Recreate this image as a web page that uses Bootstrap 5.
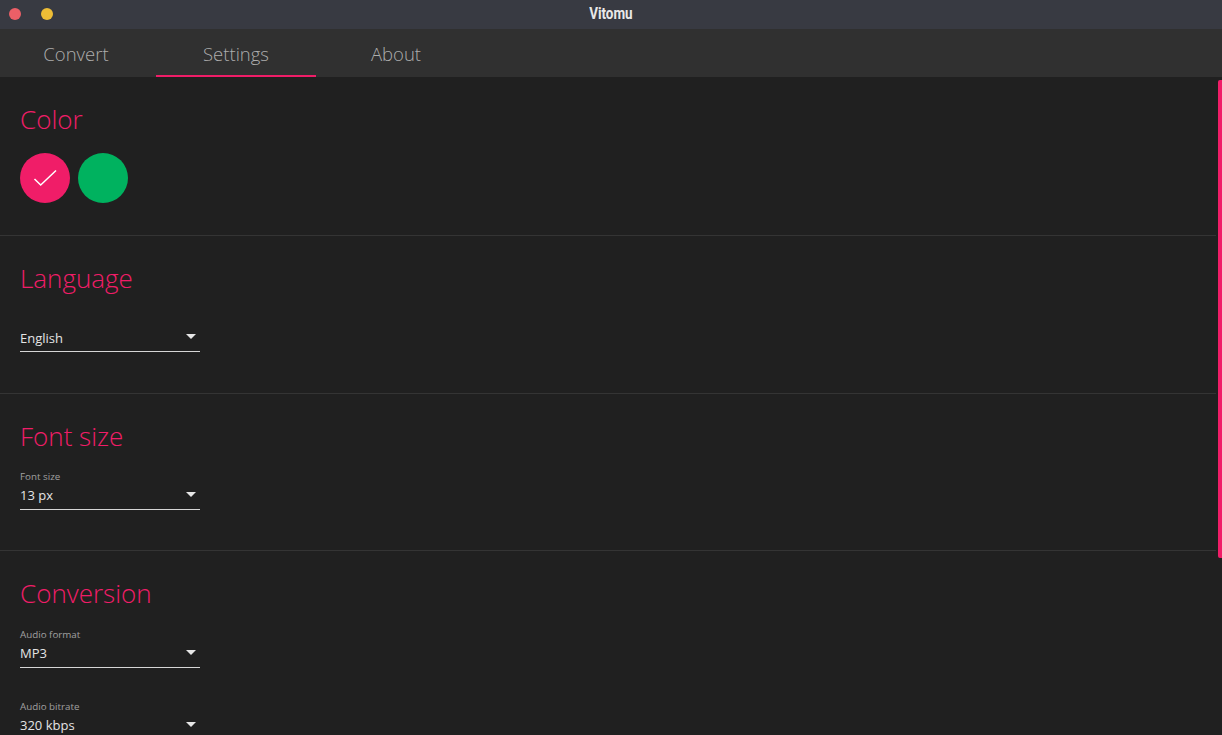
<!DOCTYPE html>
<html lang="en">
<head>
    <meta charset="UTF-8">
    <meta name="viewport" content="width=device-width, initial-scale=1.0">
    <title>Vitomu</title>
    <link href="https://cdn.jsdelivr.net/npm/bootstrap@5.3.0/dist/css/bootstrap.min.css" rel="stylesheet">
    <style>
        html, body {
            height: 100%;
            overflow: hidden;
        }
        body {
            background-color: #202020;
            font-family: "Open Sans", sans-serif;
        }
        .title-bar {
            height: 29px;
            background-color: #383a42;
        }
        .win-dot {
            width: 12px;
            height: 12px;
            border-radius: 50%;
        }
        .win-close { background-color: #ec5f67; }
        .win-min { background-color: #eebd36; }
        .win-dots {
            left: 9px;
            top: 8px;
            gap: 20px;
        }
        .win-title {
            font-family: "Roboto", sans-serif;
            font-weight: 700;
            font-size: 16px;
            line-height: 27px;
            color: #e8e8e8;
            transform: scaleX(.84);
        }
        .tab-bar {
            height: 48px;
            background-color: #303030;
        }
        .tab-item {
            width: 160px;
            height: 48px;
            line-height: 49px;
            text-align: center;
            font-weight: 300;
            font-size: 18.5px;
            color: #adadad;
            text-decoration: none;
        }
        .tab-item:first-child { margin-left: -4px; }
        .tab-item.active {
            border-bottom: 2px solid #f01d68;
        }
        .settings-pane {
            height: 658px;
            overflow: hidden;
        }
        .settings-block {
            margin-right: 6px;
            padding: 22px 0 0 20px;
            border-bottom: 1px solid #343434;
        }
        .block-color { height: 159px; }
        .block-lang { height: 158px; }
        .block-font { height: 157px; }
        .block-conv { border-bottom: 0; }
        .block-title {
            font-weight: 300;
            font-size: 26px;
            line-height: 40px;
            color: #f01d68;
            margin: 0;
        }
        .swatch {
            width: 50px;
            height: 50px;
            border-radius: 50%;
        }
        .swatch-pink { background-color: #f01d68; }
        .swatch-green { background-color: #00b25f; }
        .swatches {
            margin-top: 14px;
            gap: 8px;
        }
        .pick {
            width: 180px;
            font-family: "Open Sans", sans-serif;
            color: #e4e4e4;
        }
        .pick-label {
            font-size: 9.8px;
            line-height: 11px;
            color: #a0a0a0;
            height: 12px;
        }
        .pick-value {
            height: 27px;
            padding-bottom: 2px;
            font-size: 13px;
            line-height: 24px;
            border-bottom: 1px solid #d6d6d6;
        }
        .pick-caret {
            width: 0;
            height: 0;
            border-left: 5px solid transparent;
            border-right: 5px solid transparent;
            border-top: 5px solid #e6e6e6;
            margin-right: 4px;
            margin-bottom: 1px;
        }
        .lang-pick { margin-top: 27px; }
        .lang-pick span { padding-top: 2px; }
        .font-pick { margin-top: 15px; }
        .conv-pick { margin-top: 16px; }
        .bitrate-pick { margin-top: 33px; }
        .scroll-thumb {
            right: 0;
            top: 80px;
            width: 4px;
            height: 478px;
            background-color: #f01d68;
            border-radius: 2px 0 0 2px;
        }
    </style>
</head>
<body class="position-relative">
<div class="title-bar position-relative text-center">
    <div class="win-dots position-absolute d-flex">
        <div class="win-dot win-close"></div>
        <div class="win-dot win-min"></div>
    </div>
    <span class="win-title d-inline-block">Vitomu</span>
</div>

<nav class="tab-bar d-flex">
    <a class="tab-item" href="#">Convert</a>
    <a class="tab-item active" href="#">Settings</a>
    <a class="tab-item" href="#">About</a>
</nav>

<main class="settings-pane">
    <section class="settings-block block-color">
        <h2 class="block-title">Color</h2>
        <div class="swatches d-flex">
            <div class="swatch swatch-pink d-flex align-items-center justify-content-center">
                <svg width="24" height="18" viewBox="0 0 24 18" fill="none">
                    <path d="M1.5 10 L7.7 16 L23 1.5" stroke="#fff" stroke-width="1.5"></path>
                </svg>
            </div>
            <div class="swatch swatch-green"></div>
        </div>
    </section>
    <section class="settings-block block-lang">
        <h2 class="block-title">Language</h2>
        <div class="pick lang-pick">
            <div class="pick-value d-flex justify-content-between align-items-center"><span>English</span><i class="pick-caret"></i></div>
        </div>
    </section>
    <section class="settings-block block-font">
        <h2 class="block-title">Font size</h2>
        <div class="pick font-pick">
            <div class="pick-label">Font size</div>
            <div class="pick-value d-flex justify-content-between align-items-center"><span>13 px</span><i class="pick-caret"></i></div>
        </div>
    </section>
    <section class="settings-block block-conv">
        <h2 class="block-title">Conversion</h2>
        <div class="pick conv-pick">
            <div class="pick-label">Audio format</div>
            <div class="pick-value d-flex justify-content-between align-items-center"><span>MP3</span><i class="pick-caret"></i></div>
        </div>
        <div class="pick bitrate-pick">
            <div class="pick-label">Audio bitrate</div>
            <div class="pick-value d-flex justify-content-between align-items-center"><span>320 kbps</span><i class="pick-caret"></i></div>
        </div>
    </section>
</main>

<div class="scroll-thumb position-absolute"></div>

<script src="https://cdn.jsdelivr.net/npm/bootstrap@5.3.0/dist/js/bootstrap.bundle.min.js"></script>
</body>
</html>
